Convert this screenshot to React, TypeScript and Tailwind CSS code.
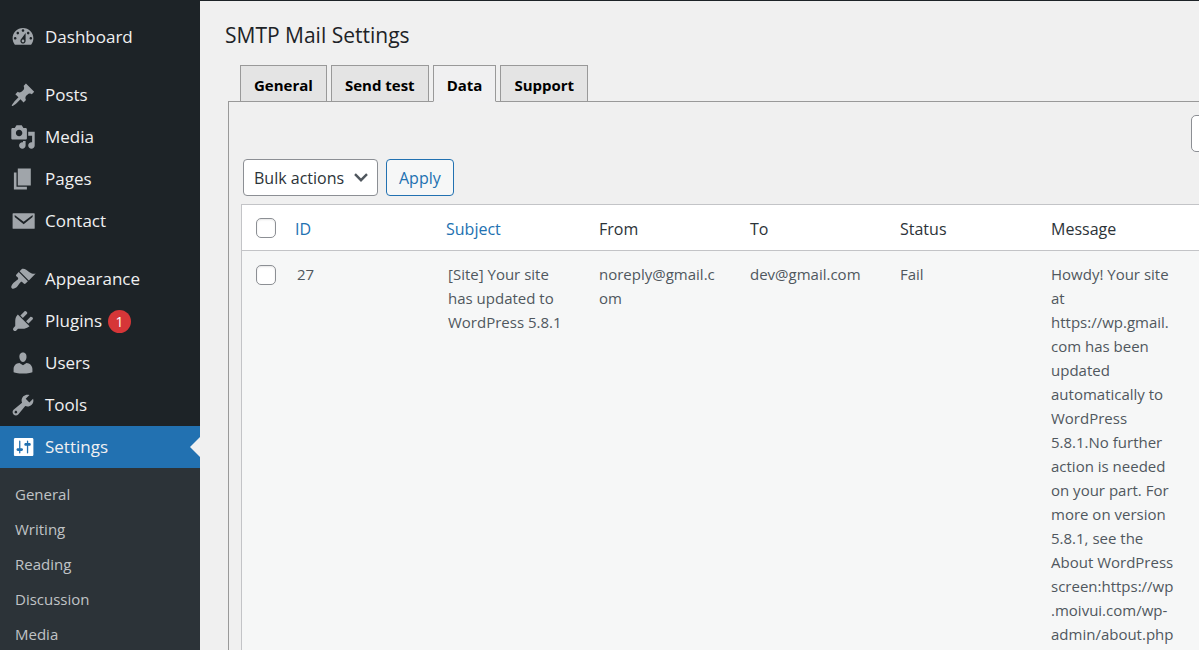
import type { ReactNode } from "react";

const icons = {
  dashboard:
    "M3.76 16h12.48c1.1-1.37 1.76-3.11 1.76-5 0-4.42-3.58-8-8-8s-8 3.58-8 8c0 1.89.66 3.63 1.76 5zM10 4c.55 0 1 .45 1 1s-.45 1-1 1-1-.45-1-1 .45-1 1-1zM6 6c.55 0 1 .45 1 1s-.45 1-1 1-1-.45-1-1 .45-1 1-1zm8 0c.55 0 1 .45 1 1s-.45 1-1 1-1-.45-1-1 .45-1 1-1zm-5.37 5.55L12 7v6c0 1.1-.9 2-2 2s-2-.9-2-2c0-.57.24-1.08.63-1.45zM4 10c.55 0 1 .45 1 1s-.45 1-1 1-1-.45-1-1 .45-1 1-1zm12 0c.55 0 1 .45 1 1s-.45 1-1 1-1-.45-1-1 .45-1 1-1zm-5 3c0-.55-.45-1-1-1s-1 .45-1 1 .45 1 1 1 1-.45 1-1z",
  posts:
    "M10.44 3.02l1.82-1.82 6.36 6.35-1.83 1.82c-1.05-.68-2.48-.57-3.41.36l-.75.75c-.92.93-1.04 2.35-.35 3.41l-1.83 1.82-2.41-2.41-2.8 2.79c-.42.42-3.38 2.71-3.8 2.29s1.86-3.39 2.28-3.81l2.79-2.79L4.1 9.36l1.83-1.82c1.05.69 2.48.57 3.4-.36l.75-.75c.93-.92 1.05-2.35.36-3.41z",
  media:
    "M13 11V4c0-.55-.45-1-1-1h-1.67L9 1H5L3.67 3H2c-.55 0-1 .45-1 1v7c0 .55.45 1 1 1h10c.55 0 1-.45 1-1zM7 4.5c1.38 0 2.5 1.12 2.5 2.5S8.38 9.5 7 9.5 4.5 8.38 4.5 7 5.62 4.5 7 4.5zM14 6h5v10.5c0 1.38-1.12 2.5-2.5 2.5S14 17.88 14 16.5s1.12-2.5 2.5-2.5c.17 0 .34.02.5.05V9h-3V6zm-4 8.05V13h2v3.5c0 1.38-1.12 2.5-2.5 2.5S7 17.88 7 16.5 8.12 14 9.5 14c.17 0 .34.02.5.05z",
  pages: "M6 15V2h10v13H6zm-1 1h8v2H3V5h2v11z",
  contact:
    "M2.5 4h16c.28 0 .5.22.5.5v11c0 .28-.22.5-.5.5h-16c-.28 0-.5-.22-.5-.5v-11c0-.28.22-.5.5-.5zM3.6 5.4v1.6L10.5 12.5 17.4 7V5.4L10.5 10.6z",
  appearance:
    "M14.48 11.06L7.41 3.99l1.5-1.5c.5-.56 2.3-.47 3.51.32 1.21.8 1.43 1.28 2.91 2.1 1.18.64 2.45 1.26 4.45.85zm-.71.71L6.7 4.7 4.93 6.47c-.39.39-.39 1.02 0 1.41l1.06 1.06c.39.39.39 1.03 0 1.42-.6.6-1.43 1.11-2.21 1.69-.35.26-.7.53-1.01.84C1.43 14.23.4 16.08 1.4 17.07c.99 1 2.84-.03 4.18-1.36.31-.31.58-.66.85-1.02.57-.78 1.08-1.61 1.69-2.21.39-.39 1.02-.39 1.41 0l1.06 1.06c.39.39 1.02.39 1.41 0z",
  plugins:
    "M13.11 4.36L9.87 7.6 8 5.73l3.24-3.24c.35-.34 1.05-.2 1.56.32.52.51.66 1.21.31 1.55zm-8 1.77l.91-1.12 9.01 9.01-1.19.84c-.71.71-2.63 1.16-3.82 1.16H6.14L4.9 17.26c-.59.59-1.54.59-2.12 0-.59-.58-.59-1.53 0-2.12l1.24-1.24v-3.88c0-1.13.4-3.19 1.09-3.89zm7.26 3.97l3.24-3.24c.34-.35 1.04-.21 1.55.31.52.51.66 1.21.31 1.55l-3.24 3.25z",
  users:
    "M10 9.25c-2.27 0-2.73-3.44-2.73-3.44C7 4.02 7.82 2 9.97 2c2.16 0 2.98 2.02 2.71 3.81 0 0-.41 3.44-2.68 3.44zm0 2.57L12.72 10c2.39 0 4.52 2.33 4.52 4.53v2.49s-3.65 1.13-7.24 1.13c-3.65 0-7.24-1.13-7.24-1.13v-2.49c0-2.25 1.94-4.48 4.47-4.48z",
  tools:
    "M16.68 9.77c-1.34 1.34-3.3 1.67-4.95.99l-5.41 6.52c-.99.99-2.59.99-3.58 0s-.99-2.59 0-3.57l6.52-5.42c-.68-1.65-.35-3.61.99-4.95 1.28-1.28 3.12-1.62 4.72-1.06l-2.89 2.89 2.82 2.82 2.86-2.87c.53 1.58.18 3.39-1.08 4.65zM3.81 16.21c.4.39 1.04.39 1.43 0 .4-.4.4-1.04 0-1.43-.39-.4-1.03-.4-1.43 0-.39.39-.39 1.03 0 1.43z",
  settings:
    "M18 16V4c0-.55-.45-1-1-1H4c-.55 0-1 .45-1 1v12c0 .55.45 1 1 1h13c.55 0 1-.45 1-1zM8 11h1c.55 0 1 .45 1 1s-.45 1-1 1H8v1.5c0 .28-.22.5-.5.5s-.5-.22-.5-.5V13H6c-.55 0-1-.45-1-1s.45-1 1-1h1V5.5c0-.28.22-.5.5-.5s.5.22.5.5V11zm5-2h-1c-.55 0-1-.45-1-1s.45-1 1-1h1V5.5c0-.28.22-.5.5-.5s.5.22.5.5V7h1c.55 0 1 .45 1 1s-.45 1-1 1h-1v5.5c0 .28-.22.5-.5.5s-.5-.22-.5-.5V9z",
};

type IconName = keyof typeof icons;

type MenuEntry = {
  label: string;
  icon: IconName;
  badge?: number;
  current?: boolean;
};

const menuGroups: MenuEntry[][] = [
  [{ label: "Dashboard", icon: "dashboard" }],
  [
    { label: "Posts", icon: "posts" },
    { label: "Media", icon: "media" },
    { label: "Pages", icon: "pages" },
    { label: "Contact", icon: "contact" },
  ],
  [
    { label: "Appearance", icon: "appearance" },
    { label: "Plugins", icon: "plugins", badge: 1 },
    { label: "Users", icon: "users" },
    { label: "Tools", icon: "tools" },
    { label: "Settings", icon: "settings", current: true },
  ],
];

const submenu = ["General", "Writing", "Reading", "Discussion", "Media"];

const tabs = ["General", "Send test", "Data", "Support"];

const messageLines = [
  "Howdy! Your site",
  "at",
  "https://wp.gmail.",
  "com has been",
  "updated",
  "automatically to",
  "WordPress",
  "5.8.1.No further",
  "action is needed",
  "on your part. For",
  "more on version",
  "5.8.1, see the",
  "About WordPress",
  "screen:https://wp",
  ".moivui.com/wp-",
  "admin/about.php",
];

function Icon({ name }: { name: IconName }) {
  return (
    <svg viewBox="0 0 20 20" className="size-[26px] shrink-0 fill-current" fillRule="evenodd" aria-hidden="true">
      <path d={icons[name]} />
    </svg>
  );
}

function MenuItem({ label, icon, badge, current }: MenuEntry) {
  return (
    <li className={current ? "relative bg-[#2271b1]" : ""}>
      <a href="#" className="flex h-[42px] items-center gap-[9px] pl-[10px] text-[17px] text-[#f0f0f1]">
        <span className={current ? "text-white" : "text-[#a0a5aa]"}>
          <Icon name={icon} />
        </span>
        <span className="flex items-center gap-[6px]">
          {label}
          {badge && (
            <span className="flex size-[23px] items-center justify-center rounded-full bg-[#d63638] text-[14px] text-white">
              {badge}
            </span>
          )}
        </span>
      </a>
      {current && (
        <svg viewBox="0 0 10 20" className="absolute top-[11px] right-0 h-5 w-[10px] fill-[#f0f0f1]" aria-hidden="true">
          <path d="M10 0v20L0 10z" />
        </svg>
      )}
    </li>
  );
}

function Sidebar() {
  return (
    <nav aria-label="Main menu" className="flex w-[200px] shrink-0 flex-col bg-[#1d2327] pt-4">
      <div className="flex flex-col gap-4">
        {menuGroups.map((group) => (
          <ul key={group[0].label}>
            {group.map((entry) => (
              <MenuItem key={entry.label} {...entry} />
            ))}
          </ul>
        ))}
      </div>
      <ul className="grow bg-[#2c3338] pt-[9px]">
        {submenu.map((label) => (
          <li key={label}>
            <a href="#" className="flex h-[35px] items-center pl-[15px] text-[15px] text-[#c0c3c6]">
              {label}
            </a>
          </li>
        ))}
      </ul>
    </nav>
  );
}

function Checkbox({ label }: { label: string }) {
  return (
    <input
      type="checkbox"
      aria-label={label}
      className="block size-5 appearance-none rounded-[5px] border border-[#8c8f94] bg-white shadow-[inset_0_1px_2px_rgba(0,0,0,0.1)]"
    />
  );
}

function HeaderCell({ className = "", children }: { className?: string; children: ReactNode }) {
  return <th className={`border-b border-[#c3c4c7] pt-[3px] pl-[10px] text-left font-normal ${className}`}>{children}</th>;
}

function LogTable() {
  return (
    <table className="w-full table-fixed border-separate border-spacing-0 border-t border-l border-[#c3c4c7] bg-white text-[#2c3338]">
      <colgroup>
        <col className="w-[43px]" />
        <col className="w-[151px]" />
        <col className="w-[153px]" />
        <col className="w-[151px]" />
        <col className="w-[150px]" />
        <col className="w-[151px]" />
        <col />
      </colgroup>
      <thead>
        <tr className="h-[46px] text-[16px]">
          <th className="border-b border-[#c3c4c7] pl-[14px]">
            <Checkbox label="Select all" />
          </th>
          <HeaderCell className="text-[#2271b1]">
            <a href="#">ID</a>
          </HeaderCell>
          <HeaderCell className="text-[#2271b1]">
            <a href="#">Subject</a>
          </HeaderCell>
          <HeaderCell>From</HeaderCell>
          <HeaderCell>To</HeaderCell>
          <HeaderCell>Status</HeaderCell>
          <HeaderCell>Message</HeaderCell>
        </tr>
      </thead>
      <tbody>
        <tr className="bg-[#f6f7f7] align-top text-[15px] leading-6 text-[#50575e]">
          <td className="pt-[14px] pl-[14px]">
            <Checkbox label="Select entry 27" />
          </td>
          <td className="px-3 pt-[11px]">27</td>
          <td className="px-3 pt-[11px]">
            [Site] Your site
            <br />
            has updated to
            <br />
            WordPress 5.8.1
          </td>
          <td className="px-[10px] pt-[11px]">
            noreply@gmail.c
            <br />
            om
          </td>
          <td className="px-[10px] pt-[11px]">dev@gmail.com</td>
          <td className="px-[10px] pt-[11px]">Fail</td>
          <td className="px-[10px] pt-[11px] pb-3 whitespace-nowrap">
            {messageLines.map((line) => (
              <span key={line} className="block">
                {line}
              </span>
            ))}
          </td>
        </tr>
      </tbody>
    </table>
  );
}

function Tabs() {
  return (
    <nav aria-label="Sections" className="flex gap-1 pl-3">
      {tabs.map((tab) => {
        const active = tab === "Data";
        return (
          <a
            key={tab}
            href="#"
            aria-current={active ? "page" : undefined}
            className={`-mb-px flex h-[37px] items-center border border-[#999] px-[13px] pt-1 text-[15px] font-bold text-black ${
              active ? "border-b-[#f0f0f1] bg-[#f0f0f1]" : "bg-[#e4e4e4]"
            }`}
          >
            {tab}
          </a>
        );
      })}
    </nav>
  );
}

export default function App() {
  return (
    <div className="flex h-screen overflow-hidden bg-[#f0f0f0] font-['Open_Sans','Noto_Sans',sans-serif]">
      <Sidebar />
      <main className="min-w-0 grow border-t border-[#1d2327]">
        <h1 className="px-[25px] pt-[19px] text-[21px] leading-[30px] text-[#1d2327]">SMTP Mail Settings</h1>
        <div className="mt-[15px] pl-7">
          <Tabs />
          <section className="overflow-hidden border-t border-l border-[#999] pt-[13px] pl-3">
            <div className="-mr-[200px] flex justify-end">
              <input
                type="search"
                aria-label="Search entries"
                className="h-[37px] w-[208px] rounded-[5px] border border-[#8c8f94] bg-white px-3"
              />
            </div>
            <div className="mt-[7px] mb-2 flex gap-2 pl-[2px]">
              <div className="relative">
                <select
                  aria-label="Bulk actions"
                  className="h-[37px] w-[135px] appearance-none rounded-[4px] border border-[#8c8f94] bg-white pl-[10px] text-[16px] text-[#2c3338]"
                >
                  <option>Bulk actions</option>
                  <option>Delete</option>
                </select>
                <svg
                  viewBox="0 0 14 9"
                  className="pointer-events-none absolute top-[14px] right-[10px] h-[9px] w-[14px] fill-none stroke-[#50575e] stroke-[2.4]"
                  aria-hidden="true"
                >
                  <path d="M1 1.2l6 6 6-6" />
                </svg>
              </div>
              <button
                type="button"
                className="h-[37px] rounded-[4px] border border-[#2271b1] bg-[#f6f7f7] px-3 text-[16px] text-[#2271b1]"
              >
                Apply
              </button>
            </div>
            <LogTable />
          </section>
        </div>
      </main>
    </div>
  );
}
